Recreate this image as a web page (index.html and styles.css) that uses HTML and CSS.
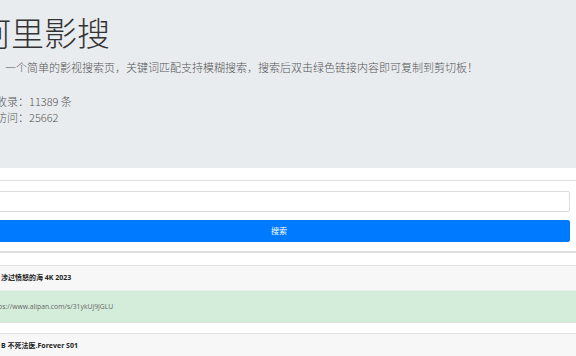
FILE: index.html
```html
<!DOCTYPE html>
<html lang="zh-CN">
<head>
<meta charset="utf-8">
<title>阿里影搜</title>
<link rel="stylesheet" href="styles.css">
</head>
<body>
<div class="page">
  <header class="jumbo">
    <h1 class="title">阿里影搜</h1>
    <p class="lead">一个简单的影视搜索页，关键词匹配支持模糊搜索，搜索后双击绿色链接内容即可复制到剪切板！</p>
    <div class="stats">
      <div class="stat">收录：11389 条</div>
      <div class="stat">访问：25662</div>
    </div>
  </header>
  <main class="main">
    <form class="card search">
      <input class="input" type="text">
      <button class="btn" type="button">搜索</button>
    </form>
    <div class="card result">
      <div class="result-head">涉过愤怒的海 4K 2023</div>
      <div class="result-body">https://www.alipan.com/s/31ykUj9JGLU</div>
    </div>
    <div class="card result">
      <div class="result-head">B 不死法医.Forever S01</div>
      <div class="result-body">&nbsp;</div>
    </div>
  </main>
</div>
</body>
</html>
```
FILE: styles.css
```css
html, body {
  margin: 0;
  padding: 0;
  background: #fff;
  overflow: hidden;
  width: 576px;
  height: 356px;
}
body {
  font-family: "Open Sans", "Noto Sans CJK SC", sans-serif;
  color: #333;
}
.page {
  width: 598px;
  margin-left: -20px;
}
.jumbo {
  background: #e9ecef;
  padding: 12px 0 43px;
}
.title {
  margin: 0 0 0 -2px;
  font-family: "Noto Sans CJK SC", sans-serif;
  font-size: 33px;
  line-height: 40px;
  font-weight: 300;
  color: #333;
}
.lead {
  margin: 7px 0 0 25px;
  font-family: "Noto Sans CJK SC", sans-serif;
  font-size: 11px;
  line-height: 16px;
  font-weight: 300;
  color: #555;
}
.stats {
  margin: 18px 0 0 16px;
  font-family: "Noto Sans CJK SC", sans-serif;
  font-size: 11px;
  line-height: 16px;
  font-weight: 300;
  color: #555;
}
.main {
  padding-top: 12px;
  display: flex;
  flex-direction: column;
}
.card {
  border: 1px solid #e2e2e2;
  box-sizing: border-box;
}
.search {
  margin: 0 0 12px;
  padding: 10px 7px 9px;
  display: flex;
  flex-direction: column;
  gap: 8px;
  border-bottom: 2px solid #dedede;
}
.input {
  box-sizing: border-box;
  height: 21px;
  border: 1px solid #dcdcdc;
  border-radius: 2px;
  background: #fff;
  margin: 0;
  padding: 0 6px;
}
.btn {
  box-sizing: border-box;
  height: 22px;
  border: 1px solid #007bff;
  border-radius: 2px;
  background: #007bff;
  color: #fff;
  font-family: "Noto Sans CJK SC", sans-serif;
  font-size: 8px;
  line-height: 20px;
  padding: 0;
  margin: 0;
}
.result {
  margin-bottom: 10px;
}
.result-head {
  background: #f7f7f7;
  height: 24px;
  line-height: 24px;
  padding-left: 20px;
  font-size: 7px;
  font-weight: 700;
  color: #222;
  border-bottom: 1px solid #ececec;
}
.result-body {
  background: #d4edda;
  height: 31px;
  line-height: 31px;
  padding-left: 8px;
  font-size: 6.8px;
  color: #666;
}
```
